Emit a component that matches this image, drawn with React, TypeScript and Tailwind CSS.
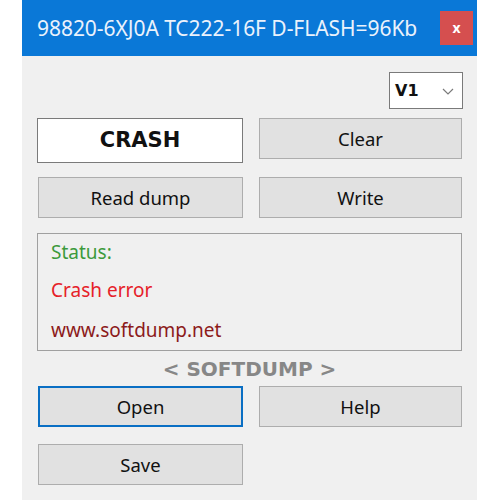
import React from "react";

const font = { fontFamily: '"Noto Sans", "Open Sans", sans-serif' };
const dv = { fontFamily: '"DejaVu Sans", Verdana, sans-serif' };

function Btn({ label, focused = false }: { label: string; focused?: boolean }) {
  return (
    <div
      className={
        "h-[41px] flex items-center justify-center bg-[#e1e1e1] text-[18.5px] text-[#111] " +
        (focused ? "border-2 border-[#0a6fc4]" : "border border-[#adadad]")
      }
    >
      {label}
    </div>
  );
}

export default function App() {
  return (
    <div className="w-[500px] h-[500px] bg-white" style={font}>
      <div className="ml-[22px] w-[455px] h-[500px] bg-[#f0f0f0] flex flex-col">
        <div className="h-[56px] bg-[#0a78d7] flex items-center pl-[15px] pr-[4px]">
          <div className="flex-1 text-[21px] text-[#eaf2fc] tracking-[-0.05px] leading-none">
            98820-6XJ0A TC222-16F D-FLASH=96Kb
          </div>
          <div className="w-[33px] h-[34px] bg-[#d54f4f] flex items-center justify-center text-white text-[14px] font-bold leading-none">
            x
          </div>
        </div>
        <div className="flex justify-end pr-[14px] mt-[16px]">
          <div className="w-[74px] h-[37px] bg-white border border-[#7a7a7a] flex items-center pl-[5px] pr-[5px]">
            <span className="text-[16px] font-bold text-[#111] flex-1" style={dv}>V1</span>
            <svg width="14" height="10" viewBox="0 0 14 10" className="mr-[2px]">
              <path d="M2 3 L7 8 L12 3" fill="none" stroke="#7a7a7a" strokeWidth="1.2" />
            </svg>
          </div>
        </div>
        <div className="pl-[15px] pr-[15px] grid grid-cols-[206px_203px] gap-x-[16px] mt-[9px] items-start">
          <div className="h-[45px] bg-white border border-[#7a7a7a] flex items-center justify-center text-[21px] font-bold text-[#111]" style={dv}>
            CRASH
          </div>
          <Btn label="Clear" />
        </div>
        <div className="pl-[16px] pr-[15px] grid grid-cols-[205px_203px] gap-x-[16px] mt-[14px]">
          <Btn label="Read dump" />
          <Btn label="Write" />
        </div>
        <div className="ml-[15px] mr-[15px] mt-[15px] h-[118px] border border-[#a0a0a0] flex flex-col pl-[13px] text-[19px]">
          <div className="h-[37px] flex items-center text-[#3c9a3c]">Status:</div>
          <div className="h-[40px] flex items-center text-[#e62129]">Crash error</div>
          <div className="h-[41px] flex items-center text-[#8c1a1a]">www.softdump.net</div>
        </div>
        <div className="h-[35px] flex items-center justify-center text-[20px] font-bold text-[#878787]" style={dv}>
          &lt; SOFTDUMP &gt;
        </div>
        <div className="pl-[16px] pr-[15px] grid grid-cols-[205px_203px] gap-x-[16px]">
          <Btn label="Open" focused />
          <Btn label="Help" />
        </div>
        <div className="pl-[16px] pr-[15px] grid grid-cols-[205px_203px] gap-x-[16px] mt-[17px]">
          <Btn label="Save" />
        </div>
      </div>
    </div>
  );
}
